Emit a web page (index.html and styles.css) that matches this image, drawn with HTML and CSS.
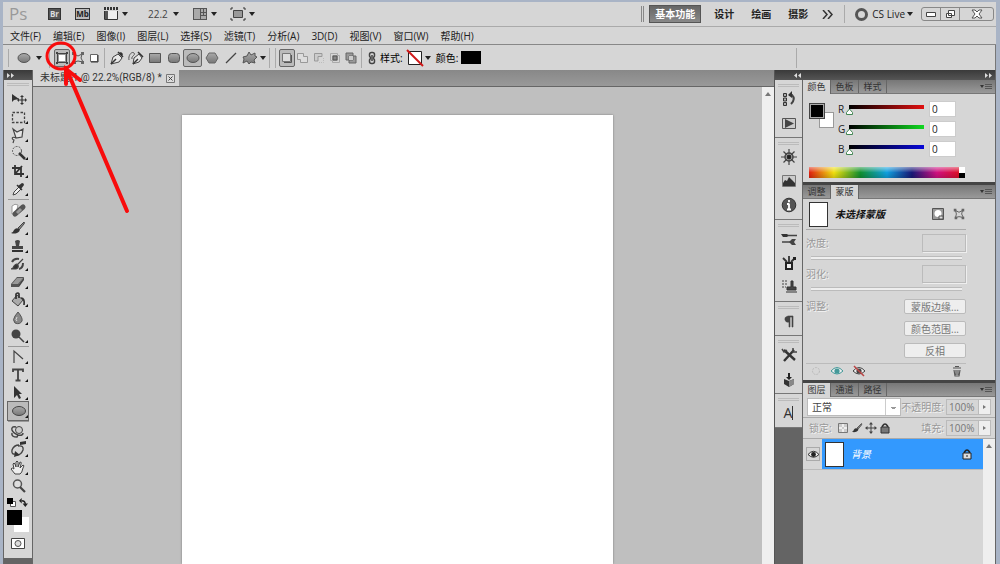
FILE: index.html
```html
<!DOCTYPE html>
<html lang="zh-CN">
<head>
<meta charset="utf-8">
<title>未标题-1</title>
<link rel="stylesheet" href="styles.css">
</head>
<body>
<svg class="sprite" aria-hidden="true">
  <defs>
    <linearGradient id="shade" x1="0" y1="0" x2="0" y2="1"><stop offset="0" stop-color="#aaa"/><stop offset="1" stop-color="#777"/></linearGradient>
  </defs>
  <symbol id="caret" viewBox="0 0 6 4"><path d="M0 0h6L3 4z" fill="#222"/></symbol>
  <symbol id="ellipse" viewBox="0 0 16 16"><ellipse cx="8" cy="8" rx="6" ry="4.5" fill="url(#shade)" stroke="#555"/></symbol>
  <symbol id="rect" viewBox="0 0 16 16"><path d="M2.5 3.5h11v9h-11z" fill="url(#shade)" stroke="#555"/></symbol>
  <symbol id="rrect" viewBox="0 0 16 16"><rect x="2.500" y="3.500" width="11" height="9" rx="3" fill="url(#shade)" stroke="#555"/></symbol>
  <symbol id="poly" viewBox="0 0 16 16"><path d="M5 3h6l3 5-3 5H5L2 8z" fill="url(#shade)" stroke="#666"/></symbol>
  <symbol id="line" viewBox="0 0 16 16"><path d="M3 13L13 3" stroke="#444" stroke-width="1.300"/></symbol>
  <symbol id="blob" viewBox="0 0 16 16"><path d="M7 2l2 3 4-2 0 3 2 1-3 3 1 3-4-1-2 2-2-3-4 2 1-4-1-2 4-1z" fill="url(#shade)" stroke="#555"/></symbol>
  <symbol id="layerShape" viewBox="0 0 16 16"><path d="M3.500 3.500h9v9h-9z" fill="#999" stroke="#444"/><path d="M5 5h6v6H5z" fill="#fff"/><path d="M2 2h2v2H2zM12 2h2v2h-2zM2 12h2v2H2zM12 12h2v2h-2z" fill="#444"/></symbol>
  <symbol id="pathShape" viewBox="0 0 16 16"><path d="M4 4l4 2 4-2-1 4 2 4-5-1-4 1 1-4z" fill="none" stroke="#555"/><path d="M2 2h3v3H2zM11 2h3v3h-3zM3 11h3v3H3zM11 11h3v3h-3z" fill="#666"/></symbol>
  <symbol id="fillShape" viewBox="0 0 16 16"><path d="M4.500 4.500h7v7h-7z" fill="#fff" stroke="#666"/><path d="M12 5v7H5" fill="none" stroke="#333"/></symbol>
  <symbol id="pen" viewBox="0 0 16 16"><path d="M2 14l2-7 5-3 4 4-3 4z" fill="#e8e8e8" stroke="#444"/><path d="M2 14l5-5M9 2l5 5" stroke="#333" stroke-width="1.500"/><path d="M10 3l2-1 2 2-1 2z" fill="#333"/></symbol>
  <symbol id="freepen" viewBox="0 0 16 16"><path d="M5 14l1-6 5-4 3 4-3 4z" fill="#e8e8e8" stroke="#444"/><path d="M5 14l5-5M10 2l5 5" stroke="#333" stroke-width="1.500"/><path d="M1 10c-1-5 3-9 5-7s-3 3-2 6" fill="none" stroke="#555"/></symbol>
  <symbol id="cNew" viewBox="0 0 16 16"><path d="M3.500 3.500h8v8h-8z" fill="#ddd" stroke="#777"/><path d="M12.500 5v7.500H5" fill="none" stroke="#555"/></symbol>
  <symbol id="cAdd" viewBox="0 0 16 16"><path d="M2.500 3.500h6v3h4v6h-7v-3h-3z" fill="#ddd" stroke="#999"/></symbol>
  <symbol id="cSub" viewBox="0 0 16 16"><path d="M3.500 11V3.500H11v3H7V11z" fill="#ccc" stroke="#999"/><path d="M8 12.500h4.500V8" fill="none" stroke="#bbb" stroke-dasharray="1 1"/></symbol>
  <symbol id="cInt" viewBox="0 0 16 16"><path d="M3.500 3.500h7v7h-7zM5.500 5.500h7v7h-7z" fill="none" stroke="#aaa"/><path d="M6 6h4v4H6z" fill="#888" stroke="#555"/></symbol>
  <symbol id="cXor" viewBox="0 0 16 16"><path d="M3 3h7v7H3zM6 6h7v7H6z" fill="#999" stroke="#666"/><path d="M6 6h4v4H6z" fill="#ccc"/></symbol>
  <symbol id="link" viewBox="0 0 16 16"><rect x="5.500" y="2.500" width="5" height="5" rx="2" fill="none" stroke="#444" stroke-width="1.500"/><rect x="5.500" y="8.500" width="5" height="5" rx="2" fill="none" stroke="#444" stroke-width="1.500"/><path d="M8 5v6" stroke="#666" stroke-width="2"/></symbol>
  <symbol id="docs" viewBox="0 0 16 14"><path d="M1 1.500h14" stroke="#333" stroke-width="3" stroke-dasharray="2 1"/><path d="M1.500 4v8.500h13V4" fill="#eee" stroke="#333"/><path d="M2 4h3v8H2z" fill="#555"/></symbol>
  <symbol id="arrange" viewBox="0 0 16 14"><path d="M1 1h14v12H1z" fill="#555"/><path d="M2 2h6v10H2zM9 2h2v3H9zM12 2h2v3h-2zM9 6h2v2H9zM12 6h2v2h-2zM9 9h5v3H9z" fill="#aaa"/></symbol>
  <symbol id="screen" viewBox="0 0 16 14"><path d="M3.500 3.500h9v7h-9z" fill="#999" stroke="#444"/><path d="M1 3V1h2M13 1h2v2M1 11v2h2M13 13h2v-2" fill="none" stroke="#333"/></symbol>
  <symbol id="move" viewBox="0 0 18 18"><path d="M3 4v8l2-2 5-1z" fill="#333"/><path d="M13 6v8M9 10h8" stroke="#333" stroke-width="1.200"/><path d="M13 5l2 2h-4zM13 15l2-2h-4zM8 10l2-2v4zM18 10l-2-2v4z" fill="#333"/></symbol>
  <symbol id="marquee" viewBox="0 0 18 18"><path d="M3.500 4.500h12v10h-12z" fill="none" stroke="#444" stroke-width="1.300" stroke-dasharray="2.500 1.500"/></symbol>
  <symbol id="lasso" viewBox="0 0 18 18"><path d="M4 3l4 3 6-3-1 8-6 1zM7 12c-4-2-5 1-2 2l-1 3" fill="#e4e4e4" stroke="#444" stroke-width="1.200"/></symbol>
  <symbol id="wand" viewBox="0 0 18 18"><circle cx="8" cy="7" r="4.500" fill="none" stroke="#555" stroke-dasharray="2 1.200"/><path d="M10 9l6 6" stroke="#333" stroke-width="2.500"/></symbol>
  <symbol id="crop" viewBox="0 0 18 18"><path d="M6 3v9h9M3 6h9v9M6 12l7-8" fill="none" stroke="#333" stroke-width="1.800"/></symbol>
  <symbol id="dropper" viewBox="0 0 18 18"><path d="M4 15l1-3 5-5 2 2-5 5z" fill="#eee" stroke="#444"/><path d="M9 6l4-3q2 0 2 2l-3 4z" fill="#333"/><path d="M8 5l5 5" stroke="#333" stroke-width="1.500"/></symbol>
  <symbol id="heal" viewBox="0 0 18 18"><path d="M3 5q3-3 6-1l-2 9H3z" fill="#fff" stroke="#999"/><path d="M6 13l8-7" stroke="#555" stroke-width="5" stroke-linecap="round"/><path d="M8 12l4-4" stroke="#999" stroke-width="3"/></symbol>
  <symbol id="brush" viewBox="0 0 18 18"><path d="M9 9l6-6q1 0 0 2l-5 6z" fill="#888" stroke="#444"/><path d="M2 14q2 0 3-3 2-3 5-1 2 2-2 4-3 1-6 0z" fill="#333"/></symbol>
  <symbol id="stamp" viewBox="0 0 18 18"><path d="M7 9l-1-5q3-2 5 0l-1 5h4v3H3V9z" fill="#444"/><path d="M3 14h11" stroke="#333" stroke-width="2"/></symbol>
  <symbol id="history" viewBox="0 0 18 18"><path d="M2 14q2 0 3-3 2-3 4-1 1 3-2 4zM8 10l6-6" fill="#333" stroke="#444" stroke-width="1.200"/><path d="M3 7q2-4 7-3M14 8q0 5-4 6" fill="none" stroke="#444" stroke-width="2"/></symbol>
  <symbol id="eraser" viewBox="0 0 18 18"><path d="M2 11l6-7h7l-5 7v3H2z" fill="#555"/><path d="M10 11l5-7v3l-5 7z" fill="#444"/><path d="M3 11l5-6h6l-5 6z" fill="#999"/></symbol>
  <symbol id="bucket" viewBox="0 0 18 18"><path d="M3 10l5-6 6 5-5 6z" fill="#aaa" stroke="#444"/><path d="M7 8V3q2-2 3 0v4M12 7q4 0 3 7" fill="none" stroke="#333" stroke-width="1.700"/></symbol>
  <symbol id="drop" viewBox="0 0 18 18"><path d="M9 3q5 6 4 9-2 4-7 2-3-3 0-7z" fill="#888" stroke="#555"/><path d="M8 8q-2 3 0 4" fill="none" stroke="#ddd"/></symbol>
  <symbol id="dodge" viewBox="0 0 18 18"><circle cx="7" cy="7" r="4.500" fill="#444"/><path d="M10 10l5 5" stroke="#444" stroke-width="1.500"/></symbol>
  <symbol id="pathpen" viewBox="0 0 18 18"><path d="M5 15V3l9 8" fill="none" stroke="#444" stroke-width="1.200"/></symbol>
  <symbol id="type" viewBox="0 0 18 18"><path d="M4 6V3.500h10V6M9 4v10M6.500 14.500h5" fill="none" stroke="#444" stroke-width="1.800"/></symbol>
  <symbol id="arrow" viewBox="0 0 18 18"><path d="M5 2v12l3-3 2 4 2-1-2-4h3z" fill="#333"/></symbol>
  <symbol id="oval" viewBox="0 0 18 18"><ellipse cx="10" cy="9" rx="6.500" ry="4.500" fill="url(#shade)" stroke="#444"/></symbol>
  <symbol id="rot3d" viewBox="0 0 18 18"><circle cx="10" cy="7" r="3.500" fill="#ccc" stroke="#444"/><path d="M7 4Q2 3 3 7q1 3 6 5 5 1 5-2M3 10q-1 4 5 4l1-2" fill="none" stroke="#444" stroke-width="1.500"/></symbol>
  <symbol id="orbit" viewBox="0 0 18 18"><path d="M10 4Q5 4 3 9q-1 5 4 4M9 5q6-1 5 4-2 5-6 5" fill="none" stroke="#444" stroke-width="1.400"/><path d="M11 1l6-1v3l-6 1zM6 10l5 4-6 2z" fill="#333"/></symbol>
  <symbol id="hand" viewBox="0 0 18 18"><path d="M6 15l-4-5q1-2 3 0L4 5q1-2 2 0l1 3V3q1-2 2 0v5l2-5q2 0 1 2l-1 4 3-3q2 0 0 3-1 5-3 6z" fill="#eee" stroke="#444"/></symbol>
  <symbol id="loupe" viewBox="0 0 18 18"><circle cx="8.500" cy="7" r="4" fill="#ddd" stroke="#555" stroke-width="1.500"/><path d="M11 10l5 5" stroke="#444" stroke-width="2.200"/></symbol>
  <symbol id="swap" viewBox="0 0 10 10"><path d="M3 3q4 0 4 4" fill="none" stroke="#222" stroke-width="1.500"/><path d="M0 3l3-3v6zM4 6h6l-3 4z" fill="#222"/></symbol>
  <symbol id="dHistory" viewBox="0 0 18 18"><path d="M3.500 3.500h3v3h-3zM3.500 8h3v3h-3zM3.500 12.500h3v3h-3z" fill="#aaa" stroke="#333"/><path d="M9 5h3q4 4-1 9" fill="none" stroke="#444" stroke-width="2"/><path d="M8 5l4-4v7z" fill="#333"/></symbol>
  <symbol id="dPlay" viewBox="0 0 18 18"><path d="M2.500 4.500h13v10h-13z" fill="#ccc" stroke="#555"/><path d="M5 5l9 4.500L5 14z" fill="#444"/></symbol>
  <symbol id="dWheel" viewBox="0 0 18 18"><circle cx="9" cy="9" r="4" fill="none" stroke="#444" stroke-width="1.500"/><path d="M9 1v16M1 9h16M3.500 3.500l11 11M14.500 3.500l-11 11" stroke="#444" stroke-width="1.200"/><circle cx="9" cy="9" r="2" fill="#222"/></symbol>
  <symbol id="dHist" viewBox="0 0 18 18"><path d="M2.500 3.500h13v11h-13z" fill="#ccc" stroke="#777"/><path d="M3 14v-3l2-3 2 1 2-4 3 3 3 3v3z" fill="#333"/></symbol>
  <symbol id="dInfo" viewBox="0 0 18 18"><circle cx="9" cy="9" r="6.800" fill="#555" stroke="#333"/><path d="M9 4v2.200M9 7.500v6M7 8h2M7 13.500h4" stroke="#fff" stroke-width="1.800"/></symbol>
  <symbol id="dBrushes" viewBox="0 0 18 18"><path d="M1 4l6 0 2 1.500L7 7H3z" fill="#333"/><path d="M8 5.500h9M2 12h9" stroke="#444" stroke-width="1.600"/><path d="M9 12l3-3h4l-2 3 2 3h-4z" fill="#444"/></symbol>
  <symbol id="dCup" viewBox="0 0 18 18"><path d="M6 9h6v6H6z" fill="#eee" stroke="#222" stroke-width="2"/><path d="M7 8L3 4M9 8V2M11 8l4-4" stroke="#333" stroke-width="1.800"/><path d="M13 3h3v3h-3z" fill="#222"/></symbol>
  <symbol id="dClone" viewBox="0 0 18 18"><path d="M2 3h5M2 6h5M2 9h4" stroke="#444" stroke-dasharray="2 1"/><path d="M11 3h2v6h3v3H7V9h4zM6 14h11" fill="#444" stroke="#333"/></symbol>
  <symbol id="dPara" viewBox="0 0 18 18"><path d="M13 4H8Q4 5 5 8q1 3 4 2v5h1V5h2v10h1z" fill="#444" stroke="#444" stroke-width=".600"/></symbol>
  <symbol id="dTools" viewBox="0 0 18 18"><path d="M4 15L14 4M4 4l11 10" stroke="#333" stroke-width="2.400"/><path d="M2 3l2 3 3-2M13 2v4h4" fill="none" stroke="#444" stroke-width="1.500"/></symbol>
  <symbol id="dCube" viewBox="0 0 18 18"><path d="M4 9l5 2 5-2v5l-5 3-5-3z" fill="#333"/><path d="M9 11l5-2v5l-5 3z" fill="#888"/><path d="M8 3h2v4h2l-3 3-3-3h2z" fill="#222"/></symbol>
  <symbol id="eye" viewBox="0 0 14 12"><path d="M1 6q6-7 12 0-6 6-12 0z" fill="#eee" stroke="currentColor"/><circle cx="7" cy="6" r="2.600" fill="currentColor"/></symbol>
  <symbol id="lock" viewBox="0 0 12 12"><path d="M3.500 6V4q2.500-4 5 0v2" fill="none" stroke="#333" stroke-width="1.500"/><path d="M2 5h8v6H2z" fill="#777" stroke="#333"/></symbol>
  <symbol id="trash" viewBox="0 0 12 12"><path d="M2 3h8M4 1.500h4M3 5l1 6h4l1-6M5 5v5M7 5v5" fill="none" stroke="#555" stroke-width="1.200"/></symbol>
  <symbol id="pmenu" viewBox="0 0 12 8"><path d="M0 2h4L2 5z" fill="#333"/><path d="M5 1.500h7M5 3.500h7M5 5.500h7" stroke="#555"/></symbol>
</svg>

<div class="app">
  <header class="appbar">
    <span class="logo">Ps</span>
    <button class="badge">Br</button>
    <button class="badge light">Mb</button>
    <button class="drop"><svg class="i16"><use href="#docs"/></svg><svg class="caret"><use href="#caret"/></svg></button>
    <button class="drop zoom">22.2<svg class="caret"><use href="#caret"/></svg></button>
    <button class="drop"><svg class="i16"><use href="#arrange"/></svg><svg class="caret"><use href="#caret"/></svg></button>
    <button class="drop"><svg class="i16"><use href="#screen"/></svg><svg class="caret"><use href="#caret"/></svg></button>
    <nav class="spaces">
      <i class="dbl"></i>
      <button class="space on">基本功能</button>
      <button class="space">设计</button>
      <button class="space">绘画</button>
      <button class="space">摄影</button>
      <button class="more" aria-label="更多"><svg width="12" height="9" viewBox="0 0 12 9"><path d="M1 0l4 4.500L1 9M6 0l4 4.500L6 9" fill="none" stroke="#333" stroke-width="1.500"/></svg></button>
      <i class="vr"></i>
      <button class="live"><i class="ring"></i>CS Live<svg class="caret"><use href="#caret"/></svg></button>
    </nav>
    <div class="winbtns">
      <button aria-label="最小化"><svg width="10" height="5"><path d="M.5.500h9v4h-9z" fill="#fff" stroke="#444"/></svg></button>
      <button aria-label="还原"><svg width="11" height="10"><path d="M3.500 1.500h6v5h-6zM1.500 4.500h5v4h-5z" fill="#fff" stroke="#444"/></svg></button>
      <button class="wide" aria-label="关闭"><svg width="12" height="10"><path d="M1 1h3l2 2 2-2h3L8 5l3 4H8L6 7 4 9H1l3-4z" fill="#fff" stroke="#555"/></svg></button>
    </div>
  </header>

  <nav class="menubar">
    <button>文件(F)</button><button>编辑(E)</button><button>图像(I)</button><button>图层(L)</button><button>选择(S)</button><button>滤镜(T)</button><button>分析(A)</button><button>3D(D)</button><button>视图(V)</button><button>窗口(W)</button><button>帮助(H)</button>
  </nav>

  <div class="options">
    <i class="grip-v"></i>
    <button class="opt"><svg class="i16"><use href="#ellipse"/></svg></button>
    <button class="tick wide"><svg class="caret"><use href="#caret"/></svg></button>
    <i class="sep first"></i>
    <div class="set">
      <button class="opt on"><svg class="i16"><use href="#layerShape"/></svg></button>
      <button class="opt"><svg class="i16"><use href="#pathShape"/></svg></button>
      <button class="opt"><svg class="i16"><use href="#fillShape"/></svg></button>
    </div>
    <i class="sep tight"></i>
    <div class="set">
      <button class="opt big"><svg class="i16"><use href="#pen"/></svg></button>
      <button class="opt big"><svg class="i16"><use href="#freepen"/></svg></button>
      <button class="opt big"><svg class="i16"><use href="#rect"/></svg></button>
      <button class="opt big"><svg class="i16"><use href="#rrect"/></svg></button>
      <button class="opt big on"><svg class="i16"><use href="#ellipse"/></svg></button>
      <button class="opt big"><svg class="i16"><use href="#poly"/></svg></button>
      <button class="opt big"><svg class="i16"><use href="#line"/></svg></button>
      <button class="opt big"><svg class="i16"><use href="#blob"/></svg></button>
    </div>
    <button class="tick"><svg class="caret"><use href="#caret"/></svg></button>
    <i class="sep tight"></i><i class="sep"></i>
    <div class="set">
      <button class="opt on"><svg class="i16"><use href="#cNew"/></svg></button>
      <button class="opt"><svg class="i16"><use href="#cAdd"/></svg></button>
      <button class="opt"><svg class="i16"><use href="#cSub"/></svg></button>
      <button class="opt"><svg class="i16"><use href="#cInt"/></svg></button>
      <button class="opt"><svg class="i16"><use href="#cXor"/></svg></button>
    </div>
    <i class="sep tight"></i>
    <button class="opt"><svg class="i16"><use href="#link"/></svg></button>
    <span class="optlabel">样式:</span>
    <button class="style" aria-label="样式"><svg width="18" height="18"><path d="M2.500 2.500h13v13h-13z" fill="#fff" stroke="#222"/><path d="M1 1l16 16" stroke="#d01818" stroke-width="2"/></svg></button>
    <button class="tick"><svg class="caret"><use href="#caret"/></svg></button>
    <span class="optlabel">颜色:</span>
    <button class="ink" aria-label="颜色"></button>
    <i class="sep end"></i>
  </div>

  <main class="work">
    <aside class="tools">
      <div class="dockhead"><svg width="8" height="5"><path d="M0 0l3 2.500L0 5zM4 0l3 2.500L4 5z" fill="#ddd"/></svg></div>
      <div class="toolbox">
        <i class="grip"></i>
        <button class="tool"><svg><use href="#move"/></svg></button>
        <button class="tool sub"><svg><use href="#marquee"/></svg></button>
        <button class="tool sub"><svg><use href="#lasso"/></svg></button>
        <button class="tool sub"><svg><use href="#wand"/></svg></button>
        <button class="tool sub"><svg><use href="#crop"/></svg></button>
        <button class="tool sub"><svg><use href="#dropper"/></svg></button>
        <hr>
        <button class="tool sub"><svg><use href="#heal"/></svg></button>
        <button class="tool sub"><svg><use href="#brush"/></svg></button>
        <button class="tool sub"><svg><use href="#stamp"/></svg></button>
        <button class="tool sub"><svg><use href="#history"/></svg></button>
        <button class="tool sub"><svg><use href="#eraser"/></svg></button>
        <button class="tool sub"><svg><use href="#bucket"/></svg></button>
        <button class="tool sub"><svg><use href="#drop"/></svg></button>
        <button class="tool sub"><svg><use href="#dodge"/></svg></button>
        <hr>
        <button class="tool sub"><svg><use href="#pathpen"/></svg></button>
        <button class="tool sub"><svg><use href="#type"/></svg></button>
        <button class="tool sub"><svg><use href="#arrow"/></svg></button>
        <button class="tool sub on"><svg><use href="#oval"/></svg></button>
        <hr>
        <button class="tool sub"><svg><use href="#rot3d"/></svg></button>
        <button class="tool sub"><svg><use href="#orbit"/></svg></button>
        <button class="tool sub"><svg><use href="#hand"/></svg></button>
        <button class="tool"><svg><use href="#loupe"/></svg></button>
        <div class="mini">
          <svg width="9" height="9"><path d="M3.500 3.500h5v5h-5z" fill="#fff" stroke="#555"/><path d="M0 0h6v6H0z" fill="#000"/></svg>
          <svg width="9" height="9"><use href="#swap"/></svg>
        </div>
        <div class="pair"><button class="bg" aria-label="背景色"></button><button class="fg" aria-label="前景色"></button></div>
        <button class="quick" aria-label="快速蒙版"><svg width="14" height="11"><path d="M.5.500h13v10H.5z" fill="#fff" stroke="#444"/><circle cx="7" cy="5.500" r="3" fill="#ddd" stroke="#555"/></svg></button>
      </div>
    </aside>

    <section class="docs">
      <div class="tabs"><div class="tab"><span>未标题-1 @ 22.2%(RGB/8) *</span><button aria-label="关闭"><svg width="9" height="9"><path d="M.5.500h8v8h-8z" fill="#ddd" stroke="#777"/><path d="M2.500 2.500l4 4M6.500 2.500l-4 4" stroke="#444"/></svg></button></div></div>
      <div class="stage">
        <div class="board"><div class="paper"></div></div>
        <div class="vscroll"><svg width="6" height="4"><path d="M0 4l3-4 3 4z" fill="#777"/></svg></div>
      </div>
    </section>

    <aside class="right">
      <div class="dockhead two">
        <svg width="8" height="5"><path d="M3 0L0 2.500 3 5zM7 0L4 2.500 7 5z" fill="#ddd"/></svg>
        <svg width="8" height="5"><path d="M0 0l3 2.500L0 5zM4 0l3 2.500L4 5z" fill="#ddd"/></svg>
      </div>
      <div class="docks">
        <div class="icons">
          <div class="igroup"><i class="grip"></i><button><svg><use href="#dHistory"/></svg></button><button><svg><use href="#dPlay"/></svg></button></div>
          <div class="igroup"><i class="grip"></i><button><svg><use href="#dWheel"/></svg></button><button><svg><use href="#dHist"/></svg></button><button><svg><use href="#dInfo"/></svg></button></div>
          <div class="igroup"><i class="grip"></i><button><svg><use href="#dBrushes"/></svg></button><button><svg><use href="#dCup"/></svg></button><button><svg><use href="#dClone"/></svg></button></div>
          <div class="igroup"><i class="grip"></i><button><svg><use href="#dPara"/></svg></button></div>
          <div class="igroup"><i class="grip"></i><button><svg><use href="#dTools"/></svg></button><button><svg><use href="#dCube"/></svg></button></div>
          <div class="igroup"><i class="grip"></i><button class="char"><span>A</span></button></div>
        </div>
        <div class="panels">
          <section class="panel">
            <div class="ptabs"><button class="on">颜色</button><button>色板</button><button>样式</button><svg class="pmenu"><use href="#pmenu"/></svg></div>
            <div class="color">
              <div class="mix">
                <div class="swatches"><button class="bg" aria-label="背景色"></button><button class="fg" aria-label="前景色"></button></div>
                <div class="channels">
                  <div class="channel"><label for="r">R</label><input class="rail red" type="range" min="0" max="255" value="0" aria-label="R"><input id="r" class="num" value="0"></div>
                  <div class="channel"><label for="g">G</label><input class="rail green" type="range" min="0" max="255" value="0" aria-label="G"><input id="g" class="num" value="0"></div>
                  <div class="channel"><label for="b">B</label><input class="rail blue" type="range" min="0" max="255" value="0" aria-label="B"><input id="b" class="num" value="0"></div>
                </div>
              </div>
              <div class="spectrum"><i></i></div>
            </div>
          </section>
          <section class="panel">
            <div class="ptabs"><button>调整</button><button class="on">蒙版</button><svg class="pmenu"><use href="#pmenu"/></svg></div>
            <div class="mask">
              <div class="mhead">
                <i class="thumb"></i><b>未选择蒙版</b>
                <button class="mbtn" aria-label="像素蒙版"><svg width="12" height="12"><path d="M.5.500h11v11H.5z" fill="#999" stroke="#555"/><circle cx="6" cy="5.500" r="3.500" fill="#fff"/><path d="M7 8h4v3H7z" fill="#ddd" stroke="#555"/></svg></button>
                <button class="mbtn" aria-label="矢量蒙版"><svg width="14" height="14"><use href="#pathShape"/></svg></button>
              </div>
              <div class="mrow"><label for="density">浓度:</label><input id="density" class="mnum" disabled></div>
              <input class="mrail" type="range" value="0" disabled aria-label="浓度">
              <div class="mrow"><label for="feather">羽化:</label><input id="feather" class="mnum" disabled></div>
              <input class="mrail" type="range" value="0" disabled aria-label="羽化">
              <div class="refine"><span>调整:</span><div class="mbuttons"><button>蒙版边缘...</button><button>颜色范围...</button><button>反相</button></div></div>
              <div class="mfoot">
                <svg width="12" height="12"><circle cx="6" cy="6" r="3.500" fill="none" stroke="#bbb" stroke-dasharray="2 1"/></svg>
                <svg class="teal" width="14" height="12"><use href="#eye"/></svg>
                <svg class="dark" width="14" height="12"><use href="#eye"/><path d="M2 1l10 10" stroke="#b44" stroke-width="1.500"/></svg>
                <svg class="last" width="12" height="12"><use href="#trash"/></svg>
              </div>
            </div>
          </section>
          <section class="panel grow">
            <div class="ptabs"><button class="on">图层</button><button>通道</button><button>路径</button><svg class="pmenu"><use href="#pmenu"/></svg></div>
            <div class="lrow">
              <select aria-label="混合模式"><option>正常</option></select>
              <label class="push" for="opacity">不透明度:</label><span class="pct"><input id="opacity" value="100%"><button aria-label="不透明度滑块"></button></span>
            </div>
            <div class="lrow locks">
              <span class="dim">锁定:</span>
              <svg width="12" height="12"><path d="M1.500 1.500h9v9h-9z" fill="#eee" stroke="#777"/><path d="M2 2h3v3H2zM7 2h3v3H7zM5 5h2v2H5zM2 7h3v3H2zM7 7h3v3H7z" fill="#ccc"/></svg>
              <svg width="12" height="12" viewBox="1 1 16 16"><use href="#brush" width="18" height="18"/></svg>
              <svg width="12" height="12"><path d="M6 1v10M1 6h10" stroke="#444"/><path d="M6 0l2 2.500H4zM6 12l2-2.500H4zM0 6l2.500-2v4zM12 6L9.500 4v4z" fill="#444"/></svg>
              <svg width="12" height="12"><use href="#lock"/></svg>
              <label class="push" for="fill">填充:</label><span class="pct"><input id="fill" value="100%"><button aria-label="填充滑块"></button></span>
            </div>
            <div class="layers">
              <div class="list">
                <div class="layer">
                  <button class="vis" aria-label="可见"><svg width="13" height="11"><use href="#eye"/></svg></button>
                  <div class="lbody"><i class="thumb"></i><em>背景</em><svg class="last" width="12" height="12"><path d="M3.500 6V4q2.500-4 5 0v2" fill="none" stroke="#222" stroke-width="1.500"/><path d="M2 5h8v6H2z" fill="#ddd" stroke="#222"/><path d="M6 7v2" stroke="#222"/></svg></div>
                </div>
              </div>
              <div class="vscroll"><svg width="6" height="4"><path d="M0 4l3-4 3 4z" fill="#777"/></svg></div>
            </div>
          </section>
        </div>
      </div>
    </aside>
  </main>
  <svg class="mark" width="140" height="220" fill="none" stroke="#f80c0c" stroke-linecap="round"><ellipse cx="61" cy="56" rx="14" ry="13" stroke-width="3"/><path d="M66 68l61 143" stroke-width="4"/><path d="M66 84V69l14 11" stroke-width="4"/></svg>
</div>
</body>
</html>
```
FILE: styles.css
```css
* { box-sizing: border-box; }
body { margin: 0; font: 10px/14px "Open Sans", "Noto Sans CJK SC", sans-serif; color: #222; }
button, input, select { font: inherit; color: inherit; margin: 0; padding: 0; border: 0; background: none; border-radius: 0; }
button { display: flex; align-items: center; justify-content: center; white-space: nowrap; }
svg { display: block; flex: none; }
i { display: block; flex: none; }
.sprite { position: absolute; width: 0; height: 0; }

.app { position: relative; display: flex; flex-direction: column; height: 100vh; overflow: hidden; background: #d6d6d6; border: solid #a9b4c6; border-width: 2px 4px 0 3px; }
.caret { width: 6px; height: 4px; }
.i16 { width: 16px; height: 16px; }

.appbar { display: flex; align-items: center; height: 25px; flex: none; border-bottom: 1px solid #aaa; padding: 0 2px 0 6px; }
.logo { width: 39px; font-size: 17px; line-height: 22px; color: #999; }
.badge { width: 13px; height: 12px; margin-right: 14px; background: #555; border: 1px solid #333; color: #ddd; font-size: 8px; line-height: 10px; font-weight: bold; }
.badge.light { width: 15px; margin-right: 13px; background: #bbb; color: #222; }
.drop { gap: 3px; margin-right: 13px; }
.drop.zoom { gap: 5px; margin-left: 7px; color: #444; }
.spaces { margin-left: auto; display: flex; align-items: center; }
.dbl { width: 3px; height: 16px; border: solid #888; border-width: 0 1px; margin-right: 5px; }
.space { font-weight: bold; height: 18px; margin-right: 17px; }
.space.on { width: 52px; background: linear-gradient(#666, #888); border: 1px solid #555; color: #fff; margin-right: 13px; }
.more { margin-right: 10px; margin-left: -3px; }
.vr { width: 1px; height: 18px; background: #aaa; margin-right: 10px; }
.live { gap: 2px; }
.ring { width: 13px; height: 13px; border: 3px solid #555; border-radius: 50%; margin-right: 2px; }
.winbtns { display: flex; margin-left: 8px; border: 1px solid #888; border-radius: 3px; height: 14px; }
.winbtns button { width: 19px; border-right: 1px solid #888; }
.winbtns .wide { width: 33px; border-right: 0; }

.menubar { display: flex; gap: 12px; flex: none; height: 18px; align-items: center; padding-left: 7px; border-bottom: 1px solid #888; }

.options { display: flex; align-items: center; flex: none; height: 25px; border-right: 1px solid #777; padding-left: 5px; }
.grip-v { width: 2px; height: 18px; border-left: 1px solid #aaa; margin-right: 6px; }
.opt { width: 16px; height: 20px; }
.opt.big { width: 19px; }
.opt.on { background: #bbb; border: 1px solid #666; border-radius: 2px; height: 18px; }
.tick { width: 8px; height: 18px; }
.tick.wide { width: 14px; }
.set { display: flex; align-items: center; }
.sep { width: 1px; height: 20px; background: #aaa; margin: 0 3px; }
.sep.first { margin: 0 4px 0 3px; }
.sep.tight { margin: 0 2px; }
.optlabel { color: #000; margin-right: 3px; }
.style { width: 18px; height: 18px; }
.tick + .optlabel { margin-left: 4px; }
.ink { width: 20px; height: 13px; background: #000; }
.sep.end { margin-left: auto; margin-right: 198px; }

.work { flex: 1; min-height: 0; display: flex; }
.dockhead { flex: none; height: 10px; background: linear-gradient(#3a3a3a, #555); display: flex; align-items: center; padding-left: 3px; }
.tools { flex: none; width: 30px; display: flex; flex-direction: column; background: #646464; border: solid #666; border-width: 0 1px; }
.toolbox { background: #d6d6d6; padding-bottom: 9px; display: flex; flex-direction: column; }
.grip { height: 3px; margin: 3px 3px 4px; border: solid #bbb; border-width: 1px 0; }
.toolbox hr { width: 21px; margin: 1px auto; border: 0; height: 1px; background: #999; flex: none; }
.tool { position: relative; height: 18px; width: 20px; margin: 0 auto; }
.tool svg { width: 18px; height: 18px; }
.tool.sub::after { content: ""; position: absolute; right: 0; bottom: 2px; border: solid transparent; border-width: 3px 0 0 3px; border-bottom: 3px solid #111; border-top: 0; }
.tool.on { background: #bbb; outline: 1px solid #666; }
.mini { display: flex; justify-content: space-between; padding: 3px 4px 3px 3px; }
.pair { display: grid; grid-template: 7px 8px 7px / 7px 8px 7px; margin: 0 auto 6px 3px; }
.pair .fg { grid-area: 1 / 1 / 3 / 3; background: #000; }
.pair .bg { grid-area: 2 / 2 / 4 / 4; background: #fff; }
.quick { margin: 0 auto; }

.docs { flex: 1; min-width: 0; display: flex; flex-direction: column; }
.tabs { flex: none; height: 17px; background: linear-gradient(#888, #999); border-bottom: 1px solid #666; display: flex; }
.tab { display: flex; align-items: center; gap: 4px; background: #d6d6d6; padding: 0 4px 0 7px; color: #333; white-space: pre; }
.tab span { font-family: Roboto, "Noto Sans CJK SC", sans-serif; }
.stage { flex: 1; min-height: 0; display: flex; }
.board { flex: 1; background: #bfbfbf; display: flex; justify-content: center; padding: 28px 0 0; }
.paper { width: 59%; background: #fff; box-shadow: 0 0 2px #777; }
.vscroll { flex: none; width: 12px; background: #efefef; padding: 5px 3px; }

.right { flex: none; width: 222px; display: flex; flex-direction: column; border-left: 1px solid #555; border-right: 1px solid #666; }
.dockhead.two { padding-left: 19px; justify-content: space-between; padding-right: 2px; }
.docks { flex: 1; min-height: 0; display: flex; }
.icons { flex: none; width: 28px; background: #646464; border-right: 1px solid #666; }
.igroup { background: #d6d6d6; border-bottom: 1px solid #777; }
.igroup .grip { margin: 0 3px; }
.igroup::before { content: ""; display: block; height: 4px; }
.igroup::after { content: ""; display: block; height: 2px; }
.igroup button { width: 100%; height: 24px; }
.igroup svg { width: 18px; height: 18px; }
.igroup .char { font-size: 14px; color: #333; }
.char span { border-right: 1px solid #333; }
.panels { flex: 1; min-width: 0; display: flex; flex-direction: column; gap: 3px; background: #444; }
.panel { background: #d6d6d6; }
.panel.grow { flex: 1; min-height: 0; display: flex; flex-direction: column; }
.ptabs { display: flex; height: 14px; flex: none; align-items: stretch; background: linear-gradient(#777, #999); border-bottom: 1px solid #777; }
.ptabs button { width: 28px; border-right: 1px solid #666; color: #333; font-size: 9px; line-height: 12px; }
.ptabs .on { background: #d6d6d6; margin-bottom: -1px; }
.pmenu { width: 12px; height: 8px; margin: 3px 3px 0 auto; }

.color { padding: 5px 6px 4px; height: 88px; }
.mix { display: flex; gap: 4px; height: 68px; }
.swatches { display: grid; grid-template: 9px 7px 9px / 10px 6px 9px; margin-top: 4px; align-content: start; }
.swatches .fg { grid-area: 1 / 1 / 3 / 3; background: #000; border: 1px solid #444; outline: 1px solid #aaa; outline-offset: -2px; }
.swatches .bg { grid-area: 2 / 2 / 4 / 4; background: #fff; border: 1px solid #999; }
.channels { display: flex; flex-direction: column; flex: 1; }
.channel { display: flex; align-items: center; height: 20px; }
.channel label { width: 8px; }
.rail { appearance: none; flex: 1; min-width: 0; max-width: 82px; height: 12px; margin-right: 1px; }
.rail::-webkit-slider-runnable-track { height: 12px; background: linear-gradient(90deg, #000, var(--end)) no-repeat 3px 2px / calc(100% - 7px) 4px; }
.rail::-webkit-slider-thumb { appearance: none; width: 7px; height: 7px; margin-top: 5px; background: url("data:image/svg+xml,%3Csvg xmlns='http://www.w3.org/2000/svg' width='7' height='7'%3E%3Cpath d='M3.500 1L6.500 4.500V6.500H.5V4.500z' fill='white' stroke='%23485'/%3E%3C/svg%3E"); }
.red { --end: #e01010; }
.green { --end: #10d820; }
.blue { --end: #0808d8; }
.num { width: 27px; height: 16px; background: #fff; border: 1px solid #ccc; padding: 0 2px; }
.spectrum { width: 156px; height: 11px; display: flex; justify-content: flex-end; background: linear-gradient(rgba(255,255,255,.5), transparent 50%, rgba(0,0,0,.15)), linear-gradient(90deg, #e02010, #f0e010 16%, #109030 33%, #10a0e0 50%, #181878 66%, #d01080 82%, #e01010); }
.spectrum i { width: 6px; background: linear-gradient(#fff 50%, #000 50%); }

.mask { padding: 3px 29px 3px 3px; height: 181px; color: #999; text-shadow: 1px 1px #f4f4f4; display: flex; flex-direction: column; }
.mhead { display: flex; align-items: center; height: 28px; border-bottom: 1px solid #aaa; padding: 0 0 3px 3px; flex: none; }
.thumb { width: 19px; height: 25px; background: #fff; border: 1px solid #333; }
.mhead b { font-style: italic; color: #111; text-shadow: none; margin: 0 auto 0 7px; }
.mbtn { margin-left: 8px; }
.mrow { display: flex; justify-content: space-between; align-items: center; height: 26px; }
.mnum { width: 44px; height: 18px; border: 1px solid #bbb; box-shadow: 1px 1px #eee; }
.mrail { appearance: none; width: auto; height: 4px; margin: 0 4px 1px 5px; background: #eee; border: solid #bbb; border-width: 1px 0; }
.mrail::-webkit-slider-thumb { appearance: none; width: 0; }
.refine { display: flex; justify-content: space-between; padding-top: 7px; }
.mbuttons { display: flex; flex-direction: column; gap: 7px; }
.mbuttons button { width: 62px; height: 15px; background: #eee; border: 1px solid #bbb; border-radius: 2px; color: #777; text-shadow: none; }
.mfoot { display: flex; gap: 8px; align-items: center; height: 14px; border-top: 1px solid #bbb; margin-top: auto; padding: 0 3px 0 4px; }
.mfoot .last, .lbody .last { margin-left: auto; }
.teal { color: #499; }
.dark { color: #444; }

.lrow { display: flex; align-items: center; height: 21px; padding: 0 4px; border-bottom: 1px solid #aaa; flex: none; color: #999; text-shadow: 1px 1px #f4f4f4; white-space: nowrap; }
.lrow select { appearance: none; width: 95px; height: 18px; border: 1px solid #bbb; padding: 0 4px; color: #444; text-shadow: none; background: linear-gradient(#ccc, #ccc) no-repeat right 14px top / 1px 100%, linear-gradient(#999, #999) no-repeat right 4px center / 5px 1px, linear-gradient(#999, #999) no-repeat right 5px top 8px / 3px 2px, #fff; }
.push { margin-left: auto; margin-right: 2px; }
.pct { display: flex; height: 16px; border: 1px solid #bbb; }
.pct input { width: 31px; padding-left: 2px; color: #777; text-shadow: none; }
.pct button { width: 12px; border-left: 1px solid #bbb; background: #eee; }
.pct button::before { content: ""; border: solid transparent; border-width: 2px 0 2px 3px; border-left-color: #777; }
.locks { gap: 2px; }
.dim { margin: 0 3px 0 2px; }
.locks .push { margin-right: 0; }
.layers { flex: 1; min-height: 0; display: flex; }
.list { flex: 1; }
.layer { display: flex; height: 31px; align-items: center; border-bottom: 1px solid #bbb; padding-left: 3px; }
.vis { width: 14px; height: 14px; border: 1px solid #aaa; margin-right: 2px; color: #222; }
.lbody { flex: 1; align-self: stretch; display: flex; align-items: center; gap: 7px; background: #3399fe; padding: 0 10px 0 3px; color: #fff; }

.mark { position: absolute; left: -3px; top: -2px; pointer-events: none; }
```
